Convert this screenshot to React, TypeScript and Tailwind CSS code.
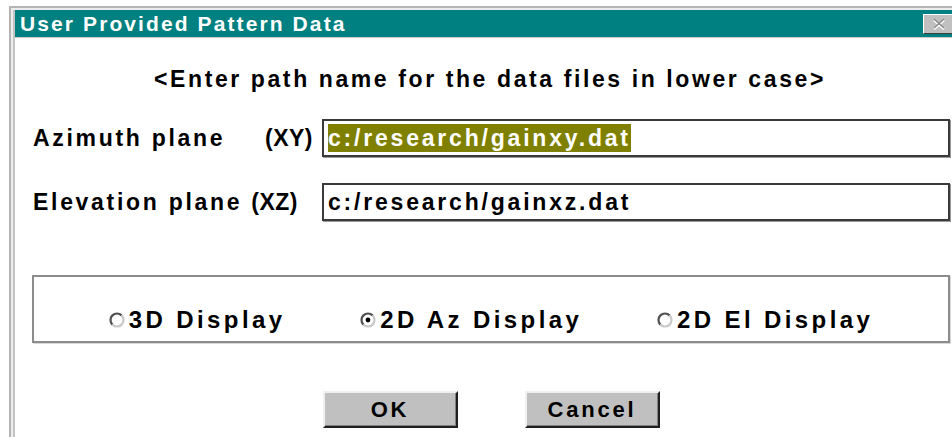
import React from 'react';

// Radio bullet with the sunken Win3.x look
function Radio({ checked }: { checked?: boolean }) {
  return (
    <svg width="16" height="16" viewBox="0 0 16 16" className="shrink-0">
      <circle cx="8" cy="8" r="6.5" fill="#fff" />
      <path d="M12.6 3.4 A6.5 6.5 0 0 0 3.4 12.6" stroke="#505050" strokeWidth="2.2" fill="none" />
      <path d="M3.4 12.6 A6.5 6.5 0 0 0 12.6 3.4" stroke="#c8c8c8" strokeWidth="2.2" fill="none" />
      {checked && <circle cx="8" cy="8" r="2.4" fill="#000" />}
    </svg>
  );
}

function PushButton({ label }: { label: string }) {
  return (
    <button className="w-[135px] h-[37px] bg-[#c0c0c0] border-2 border-t-[#f0f0f0] border-l-[#f0f0f0] border-r-[#202020] border-b-[#202020] shadow-[inset_-1px_-1px_0_#808080] text-[22px] font-bold tracking-[2.8px] text-black">
      {label}
    </button>
  );
}

export default function App() {
  const displays = [
    { label: '3D Display', checked: false },
    { label: '2D Az Display', checked: true },
    { label: '2D El Display', checked: false },
  ];

  return (
    <div className="w-[952px] h-[437px] bg-white overflow-hidden pt-[6px] pl-[9px] font-['Liberation_Sans',Arial,sans-serif] text-black">
      {/* window frame: grey / white / grey bands */}
      <div className="w-[960px] h-[440px] border-l-2 border-t-2 border-[#b4b4b4]">
        <div className="h-full border-l-2 border-t-2 border-[#ececec]">
          <div className="h-full border-l-2 border-[#c4c4c4]">
            {/* caption bar */}
            <div className="h-[28px] bg-[#008080] border-b border-[#c8c8c8] flex items-center justify-between pl-[5px]">
              <span className="text-white font-bold text-[21px] tracking-[2.1px] leading-none">
                User Provided Pattern Data
              </span>
              <div className="w-[32px] h-[20px] mr-[14px] bg-[#c0c0c0] border border-t-white border-l-white border-r-[#404040] border-b-[#404040] flex items-center justify-center">
                <svg width="18" height="12" viewBox="0 0 18 12">
                  <path d="M4 2 L14 11 M14 2 L4 11" stroke="#fff" strokeWidth="2.4" />
                  <path d="M4 1 L14 10 M14 1 L4 10" stroke="#8a8a8a" strokeWidth="1.6" />
                </svg>
              </div>
            </div>

            <div className="pl-[17px] pr-[19px] pt-[28px]">
              <p className="text-center font-bold text-[23px] leading-[26px] tracking-[2.6px] pr-[2px]">
                &lt;Enter path name for the data files in lower case&gt;
              </p>

              {/* path fields */}
              <div className="mt-[27px] flex items-center">
                <div className="w-[290px] pl-[1px] font-bold text-[23px] flex">
                  <span className="w-[232px] tracking-[2.7px]">Azimuth plane</span>
                  <span className="tracking-[0.5px]">(XY)</span>
                </div>
                <div className="flex-1 h-[38px] border-2 border-[#3a3a3a] shadow-[1px_1px_0_#9a9a9a] bg-white flex items-center px-[4px]">
                  <span className="bg-[#808000] text-white font-bold text-[23px] leading-[28px] tracking-[2.8px]">
                    c:/research/gainxy.dat
                  </span>
                </div>
              </div>

              <div className="mt-[26px] flex items-center">
                <div className="w-[290px] pl-[1px] font-bold text-[23px] whitespace-nowrap">
                  <span className="tracking-[2.7px]">Elevation plane </span>
                  <span className="tracking-[0.5px]">(XZ)</span>
                </div>
                <div className="flex-1 h-[38px] border-2 border-[#3a3a3a] shadow-[1px_1px_0_#9a9a9a] bg-white flex items-center px-[4px]">
                  <span className="font-bold text-[23px] leading-[28px] tracking-[2.8px]">
                    c:/research/gainxz.dat
                  </span>
                </div>
              </div>

              {/* display mode group */}
              <div className="mt-[54px] h-[68px] border-2 border-[#8c8c8c] shadow-[1px_1px_0_#d8d8d8] flex justify-evenly items-start pt-[30px]">
                {displays.map((d) => (
                  <label key={d.label} className="flex items-center gap-[4px]">
                    <Radio checked={d.checked} />
                    <span className="font-bold text-[24px] leading-[26px] tracking-[3.4px]">{d.label}</span>
                  </label>
                ))}
              </div>

              <div className="mt-[48px] flex justify-center gap-[67px]">
                <PushButton label="OK" />
                <PushButton label="Cancel" />
              </div>
            </div>
          </div>
        </div>
      </div>
    </div>
  );
}
